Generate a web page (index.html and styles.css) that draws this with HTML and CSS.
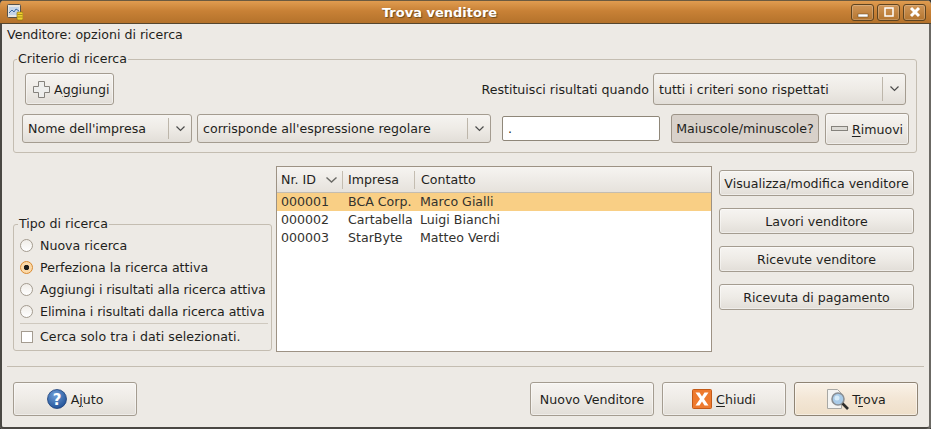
FILE: index.html
```html
<!DOCTYPE html>
<html>
	<head>
		<meta charset="UTF-8">
		<title>Trova venditore</title>
		<link rel="stylesheet" href="styles.css">
	</head>
	<body>
		<div class="window">

			<!--barra del titolo-->
			<div class="titlebar">
				<svg class="appIcon" width="16" height="17" viewBox="0 0 16 17">
					<rect x="0.5" y="0.5" width="13" height="13" rx="1" fill="#e8e6e0" stroke="#55524c"/>
					<rect x="2" y="3" width="10" height="8" fill="#c4d4e8"/>
					<path d="M2 9l3-3 2 2 2-3 3 2" fill="none" stroke="#3d6aa0"/>
					<rect x="10" y="8" width="6" height="8" rx="1" fill="#f0d030" stroke="#8a7410" stroke-width="0.7"/>
					<path d="M10.500 10.500h5M10.500 13h5" stroke="#8a7410" stroke-width="0.7"/>
				</svg>
				<span class="titleText">Trova venditore</span>
				<div class="winBtns">
					<div class="winBtn">
						<svg width="12" height="12" viewBox="0 0 12 12"><rect x="1" y="8" width="10" height="3" fill="#fff" stroke="#5f4420" stroke-width="0.5"/></svg>
					</div>
					<div class="winBtn">
						<svg width="12" height="12" viewBox="0 0 12 12"><rect x="2" y="2" width="8" height="8" fill="none" stroke="#fff" stroke-width="1.500"/></svg>
					</div>
					<div class="winBtn">
						<svg width="14" height="14" viewBox="0 0 14 14"><path d="M3 3l8 8M11 3l-8 8" stroke="#fff" stroke-width="3"/></svg>
					</div>
				</div>
			</div>

			<div class="subtitle">Venditore: opzioni di ricerca</div>

			<!--criteri-->
			<fieldset class="frame criteria">
				<legend>Criterio di ricerca</legend>
				<div class="rowTop">
					<button class="btn addBtn">
						<svg width="17" height="17" viewBox="0 0 17 17"><path d="M5.500 .5h6v5h5v6h-5v5h-6v-5h-5v-6h5z" fill="#eeeeec" stroke="#85827c"/></svg>
						<span>A<u>g</u>giungi</span>
					</button>
					<span class="whenLabel">Restituisci risultati quando</span>
					<div class="combo comboWhen">
						<span class="comboText">tutti i criteri sono rispettati</span>
						<i class="comboSep"></i>
						<svg class="chev" width="9" height="6" viewBox="0 0 9 6"><path d="M.5 .5l4 4 4-4" fill="none" stroke="#4c4c4c" stroke-width="1.2"/></svg>
					</div>
				</div>
				<div class="rowCrit">
					<div class="combo comboField">
						<span class="comboText">Nome dell'impresa</span>
						<i class="comboSep"></i>
						<svg class="chev" width="9" height="6" viewBox="0 0 9 6"><path d="M.5 .5l4 4 4-4" fill="none" stroke="#4c4c4c" stroke-width="1.2"/></svg>
					</div>
					<div class="combo comboMatch">
						<span class="comboText">corrisponde all'espressione regolare</span>
						<i class="comboSep"></i>
						<svg class="chev" width="9" height="6" viewBox="0 0 9 6"><path d="M.5 .5l4 4 4-4" fill="none" stroke="#4c4c4c" stroke-width="1.2"/></svg>
					</div>
					<div class="entry">.</div>
					<button class="btn toggleOn">Maiuscole/minuscole?</button>
					<button class="btn removeBtn">
						<svg width="17" height="6" viewBox="0 0 17 6"><rect x=".5" y=".5" width="16" height="4" fill="#dcdad5" stroke="#85827c"/></svg>
						<span><u>R</u>imuovi</span>
					</button>
				</div>
			</fieldset>

			<div class="middle">
				<fieldset class="frame searchType">
					<legend>Tipo di ricerca</legend>
					<label class="radioRow"><i class="radio"></i>Nuova ricerca</label>
					<label class="radioRow"><i class="radio on"></i>Perfeziona la ricerca attiva</label>
					<label class="radioRow tight"><i class="radio"></i>Aggiungi i risultati alla ricerca attiva</label>
					<label class="radioRow tight"><i class="radio"></i>Elimina i risultati dalla ricerca attiva</label>
					<div class="typeSep"></div>
					<label class="checkRow"><i class="check"></i>Cerca solo tra i dati selezionati.</label>
				</fieldset>

				<div class="list">
					<div class="listHead">
						<div class="headCell colId">Nr. ID
							<svg width="11" height="6" viewBox="0 0 11 6"><path d="M.5 .5l5 4.500 5-4.500" fill="none" stroke="#6a6a66" stroke-width="1.4"/></svg>
						</div>
						<div class="headCell colCo">Impresa</div>
						<div class="headCell colLast">Contatto</div>
					</div>
					<div class="listRow selected"><span class="colId">000001</span><span class="colCo">BCA Corp.</span><span>Marco Gialli</span></div>
					<div class="listRow"><span class="colId">000002</span><span class="colCo">Cartabella</span><span>Luigi Bianchi</span></div>
					<div class="listRow"><span class="colId">000003</span><span class="colCo">StarByte</span><span>Matteo Verdi</span></div>
				</div>

				<div class="sideBtns">
					<button class="btn sideBtn">Visualizza/modifica venditore</button>
					<button class="btn sideBtn">Lavori venditore</button>
					<button class="btn sideBtn">Ricevute venditore</button>
					<button class="btn sideBtn">Ricevuta di pagamento</button>
				</div>
			</div>

			<div class="sep"></div>

			<!--pulsanti in basso-->
			<div class="actions">
				<button class="btn actBtn">
					<svg width="20" height="20" viewBox="0 0 20 20">
						<defs><radialGradient id="helpFill" cx="40%" cy="30%" r="75%"><stop offset="0" stop-color="#6f9fd8"/><stop offset="1" stop-color="#1f4f95"/></radialGradient></defs>
						<circle cx="10" cy="10" r="9.500" fill="url(#helpFill)" stroke="#1c3f78" stroke-width="0.8"/>
						<text x="10" y="15.500" text-anchor="middle" class="helpMark">?</text>
					</svg>
					<span>A<u>j</u>uto</span>
				</button>
				<div class="actGap"></div>
				<button class="btn actBtn">Nuovo Venditore</button>
				<button class="btn actBtn">
					<svg width="20" height="20" viewBox="0 0 20 20">
						<rect x=".5" y=".5" width="19" height="19" rx="1" fill="#ee7a2e" stroke="#c25a18"/>
						<path d="M3.500 3.500h4l2.500 4 2.500-4h4l-4.500 6.500 4.500 6.500h-4l-2.500-4-2.500 4h-4l4.500-6.500z" fill="#fff"/>
					</svg>
					<span><u>C</u>hiudi</span>
				</button>
				<button class="btn actBtn trovaBtn">
					<svg width="24" height="23" viewBox="0 0 24 23">
						<path d="M1.500 1.500h10l4 4v15h-14z" fill="#f4f4f2" stroke="#a8a8a4"/>
						<circle cx="12" cy="11" r="6" fill="#a9cbe8" stroke="#8a8f94" stroke-width="1.600"/>
						<circle cx="11" cy="10" r="2.500" fill="#d8ecf8"/>
						<path d="M16.500 15.500l5.500 5.500" stroke="#2e2e2c" stroke-width="2.600"/>
					</svg>
					<span>T<u>r</u>ova</span>
				</button>
			</div>
		</div>
	</body>
</html>
```

FILE: styles.css
```css
*{
	margin:0;
	padding:0;
	box-sizing:border-box;
}

body{
	font-family:"DejaVu Sans",sans-serif;
	font-size:12.6px;
	color:#1f1f1c;
	background:#3c3b37;
}

.window{
	width:931px;
	height:429px;
	overflow:hidden;
	background:#edeae5;
	box-shadow:inset 2px 0 #4a4843,inset -2px 0 #6b6964,inset 0 -2px #4a4843;
	border-radius:5px 5px 4px 4px;
}

/* titlebar */
.titlebar{
	height:24px;
	display:flex;
	align-items:center;
	padding:0 5px 0 7px;
	background:linear-gradient(#e09c50,#c88136 45%,#b4722b);
	border-top:1px solid #6b5a40;
	border-bottom:1px solid #55462f;
}
.appIcon{
	flex:none;
}
.titleText{
	flex:1;
	text-align:center;
	color:#fff;
	font-size:13px;
	font-weight:bold;
	padding-left:5px;
	text-shadow:1px 1px 1px #6b4a1c;
}
.winBtns{
	display:flex;
	gap:3px;
}
.winBtn{
	width:23px;
	height:17px;
	display:flex;
	align-items:center;
	justify-content:center;
	border:1px solid #5f4420;
	border-radius:3px;
	background:linear-gradient(#d09658,#b4752f);
	box-shadow:inset 0 0 0 1px rgba(255,255,255,.2);
}

.subtitle{
	height:20px;
	line-height:21px;
	padding-left:7px;
}

/* frames */
.frame{
	border:1px solid #c4bdb1;
	border-radius:3px;
	min-width:0;
}
.frame legend{
	padding:0 1px;
	line-height:14px;
}
.criteria{
	margin:8px 14px 0 13px;
	padding:7px 7px 7px 8px;
}
.criteria legend{
	margin-left:-5px;
}
.rowTop{
	display:flex;
	align-items:center;
	margin:0 3px 8px 3px;
}
.rowCrit{
	display:flex;
	align-items:center;
}
.whenLabel{
	margin-left:auto;
	margin-right:4px;
}

/* buttons */
.btn{
	font:inherit;
	color:inherit;
	display:flex;
	align-items:center;
	justify-content:center;
	gap:4px;
	border:1px solid #a49c90;
	border-radius:3px;
	background:linear-gradient(#f6f4f1,#eeebe6 50%,#e2ded8);
	box-shadow:inset 0 0 0 1px rgba(255,255,255,.45);
	white-space:nowrap;
}
u{
	text-underline-offset:2px;
}
.addBtn{
	width:89px;
	height:32px;
	justify-content:flex-start;
	padding-left:7px;
}
.toggleOn{
	width:148px;
	height:29px;
	margin-left:11px;
	margin-bottom:1px;
	background:#d8d1ca;
	border-color:#9c9387;
	box-shadow:none;
}
.removeBtn{
	width:84px;
	height:32px;
	margin-left:6px;
}

/* combo */
.combo{
	display:flex;
	align-items:center;
	border:1px solid #a49c90;
	border-radius:3px;
	background:linear-gradient(#f6f4f1,#eeebe6 50%,#e2ded8);
	padding-left:5px;
}
.comboText{
	flex:1;
	white-space:nowrap;
}
.comboSep{
	width:1px;
	align-self:stretch;
	margin:3px 0;
	background:#bdb6aa;
}
.chev{
	margin:0 6px 0 7px;
}
.comboWhen{
	width:253px;
	height:32px;
}
.comboField{
	width:170px;
	height:29px;
	margin-bottom:1px;
}
.comboMatch{
	width:294px;
	height:29px;
	margin-left:5px;
	margin-bottom:1px;
}
.entry{
	width:158px;
	height:25px;
	line-height:23px;
	margin-left:11px;
	margin-bottom:1px;
	padding-left:5px;
	background:#fff;
	border:1px solid #8f8779;
	border-radius:2px;
}

/* middle */
.middle{
	display:flex;
	height:186px;
	margin-top:13px;
	padding-left:13px;
}
.searchType{
	width:259px;
	align-self:flex-end;
	margin-bottom:1px;
	padding:3px 3px 0 6px;
	height:134px;
}
.searchType legend{
	margin-left:-2px;
}
.radioRow{
	height:22px;
	display:flex;
	align-items:center;
	gap:7px;
	white-space:nowrap;
}
.tight{
	letter-spacing:-.07px;
}
.radio{
	width:13px;
	height:13px;
	border-radius:50%;
	border:1px solid #a49c90;
	background:linear-gradient(#f0ede8,#fff);
	flex:none;
}
.radio.on{
	background:radial-gradient(circle,#1f1f1c 2.400px,#fbd9a8 3px);
	border-color:#d98a30;
}
.typeSep{
	height:1px;
	margin-top:1px;
	background:#cfc9bf;
}
.checkRow{
	display:flex;
	align-items:center;
	gap:7px;
	height:25px;
	padding-left:1px;
	white-space:nowrap;
	letter-spacing:.06px;
}
.check{
	width:12px;
	height:12px;
	flex:none;
	border:1px solid #a49c90;
	background:#fff;
}

/* list */
.list{
	width:436px;
	margin-left:4px;
	background:#fff;
	border:1px solid #9d9284;
}
.listHead{
	display:flex;
	height:26px;
	align-items:center;
	background:linear-gradient(#f6f4f1,#e6e2dc);
	border-bottom:1px solid #c4bdb1;
}
.headCell{
	height:18px;
	line-height:18px;
	display:flex;
	align-items:center;
	justify-content:space-between;
	padding:0 5px 0 4px;
	border-right:1px solid #c4bdb1;
}
.headCell.colLast{
	border-right:0;
	padding-left:6px;
}
.headCell.colCo{
	padding-left:5px;
}
.colId{
	width:66px;
	flex:none;
}
.colCo{
	width:72px;
	flex:none;
}
.listRow{
	display:flex;
	height:18px;
	line-height:18px;
	padding-left:4px;
	color:#33322e;
}
.listRow .colId{
	width:67px;
}
.listRow .colCo{
	width:72px;
}
.selected{
	background:#f9cf85;
}

/* right buttons */
.sideBtns{
	width:195px;
	margin-left:7px;
	padding-top:4px;
	display:flex;
	flex-direction:column;
	gap:12px;
}
.sideBtn{
	height:26px;
	flex:none;
}

.sep{
	height:1px;
	margin:14px 7px 0 7px;
	background:#c4bdb1;
}

/* bottom */
.actions{
	display:flex;
	gap:8px;
	margin-top:15px;
	padding:0 13px;
}
.actBtn{
	width:124px;
	height:34px;
}
.actGap{
	flex:1;
}
.trovaBtn{
	gap:2px;
	background:linear-gradient(#f9f2e8,#f3e6d5 50%,#eedfc9);
	border-color:#8f8474;
}
.helpMark{
	font-size:15px;
	font-weight:bold;
	fill:#fff;
}
```
